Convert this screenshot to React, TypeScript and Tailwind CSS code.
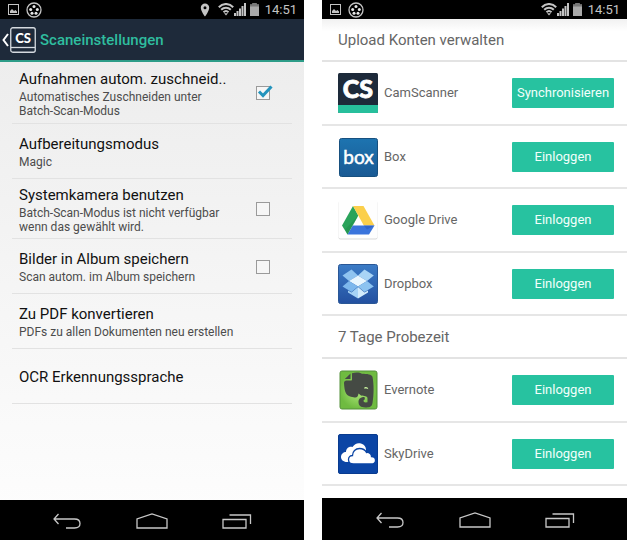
import type { ReactNode } from "react";
import { clsx } from "clsx";

const settings = [
  {
    id: "crop",
    title: "Aufnahmen autom. zuschneid..",
    lines: ["Automatisches Zuschneiden unter", "Batch-Scan-Modus"],
    checkbox: true,
    checked: true,
    height: "min-h-[62px]",
  },
  { id: "mode", title: "Aufbereitungsmodus", lines: ["Magic"], height: "min-h-[55px]" },
  {
    id: "camera",
    title: "Systemkamera benutzen",
    lines: ["Batch-Scan-Modus ist nicht verfügbar", "wenn das gewählt wird."],
    checkbox: true,
    height: "min-h-[60px]",
  },
  {
    id: "album",
    title: "Bilder in Album speichern",
    lines: ["Scan autom. im Album speichern"],
    checkbox: true,
    height: "min-h-[55px]",
  },
  {
    id: "pdf",
    title: "Zu PDF konvertieren",
    lines: ["PDFs zu allen Dokumenten neu erstellen"],
    height: "min-h-[55px]",
  },
  { id: "ocr", title: "OCR Erkennungssprache", lines: [], height: "min-h-[55px]" },
];

function CamScannerIcon() {
  return (
    <svg viewBox="0 0 40 40" className="size-10">
      <rect width="40" height="40" rx="1.500" fill="#1d2a3a" />
      <path d="M0 32h40v6.500a1.500 1.500 0 0 1-1.500 1.500h-37a1.500 1.500 0 0 1-1.500-1.500z" fill="#27bf9c" />
      <text
        x="20"
        y="25"
        textAnchor="middle"
        fill="#fff"
        stroke="#fff"
        strokeWidth="0.800"
        className="font-['Lato'] text-[25px] font-black"
      >
        CS
      </text>
    </svg>
  );
}

function BoxIcon() {
  return (
    <svg viewBox="0 0 40 40" className="size-10">
      <defs>
        <linearGradient id="box-bg" x1="0" y1="0" x2="0" y2="1">
          <stop offset="0" stopColor="#1d74b0" />
          <stop offset="1" stopColor="#1a5a94" />
        </linearGradient>
      </defs>
      <rect x="1.500" y="1.500" width="38" height="38" rx="2" fill="url(#box-bg)" stroke="#17507f" />
      <text
        x="20.500"
        y="27"
        textAnchor="middle"
        fill="#fff"
        stroke="#fff"
        strokeWidth="0.500"
        className="font-['Lato'] text-[19px] font-normal"
      >
        box
      </text>
    </svg>
  );
}

function DriveIcon() {
  return (
    <svg viewBox="0 0 40 40" className="size-10">
      <rect x="0.500" y="1" width="39" height="38.500" rx="2" fill="#d9d9d9" />
      <rect x="0.500" y="0" width="39" height="38.500" rx="2" fill="#fefefe" />
      <path d="M15 6 L4 25.500 L9.500 34.500 L20.300 15.500z" fill="#2aa35a" />
      <path d="M15 6h10.500L36.500 25.500H25.800z" fill="#fbcf4b" />
      <path d="M14.800 25.500H36.500L31 34.500H9.500z" fill="#3a74dc" />
      <path d="M14.800 25.500 L9.500 34.500 L7 29.500 L20.300 15.500z" fill="#1c8a48" opacity="0.45" />
      <path d="M25.800 25.500H36.500L29 29.500z" fill="#2556b5" opacity="0.5" />
    </svg>
  );
}

function DropboxIcon() {
  return (
    <svg viewBox="0 0 40 40" className="size-10">
      <defs>
        <linearGradient id="dropbox-bg" x1="0" y1="0" x2="0" y2="1">
          <stop offset="0" stopColor="#3c7cc6" />
          <stop offset="1" stopColor="#2350a0" />
        </linearGradient>
      </defs>
      <rect x="0.500" y="0.500" width="39" height="39" rx="2" fill="url(#dropbox-bg)" stroke="#2a5796" />
      <path d="M13.500 5.500 L20 11.500 L11 17 L4.500 11.500z" fill="#8fc4f0" />
      <path d="M26.500 5.500 L20 11.500 L29 17 L35.800 11.500z" fill="#a9d4f5" />
      <path d="M20 11.500 L29 17 L20 22.500 L11 17z" fill="#e8f6fe" />
      <path d="M11 17 L4.500 22.500 L13.500 28 L20 22.500z" fill="#7cb7ec" />
      <path d="M29 17 L35.800 22.500 L26.500 28 L20 22.500z" fill="#8cc3f0" />
      <path d="M20 23 L13.500 28.500 L10 26.500V28.500L20 34.500z" fill="#a6d3f6" />
      <path d="M20 23 L26.500 28.500 L30 26.500V28.500L20 34.500z" fill="#d2ebfc" />
    </svg>
  );
}

function EvernoteIcon() {
  return (
    <svg viewBox="0 0 40 40" className="size-10">
      <defs>
        <radialGradient id="evernote-bg">
          <stop offset="0" stopColor="#b4ec80" />
          <stop offset="1" stopColor="#6fbb40" />
        </radialGradient>
      </defs>
      <rect x="2" y="1" width="37" height="38" rx="2" fill="url(#evernote-bg)" stroke="#55913a" />
      <path
        d="M14 3.200 C18 2.200 22 2.500 24 3.800 C29 3.800 34 4.500 34.500 7 C36 14 36 25 34.500 33 C34 37 31 37.500 27.500 37.500 C22.500 37.500 20.500 35.500 20.500 31.800 C20.500 28.500 23 27 26.500 27 L27 29.500 C25 29.500 25 32.300 27.500 32.500 L29.500 32.300 V28.500 C29.500 25.800 26 26 23 25.500 L20.500 23.500 C20 27 19 27.800 15.500 27.200 C8 26.500 6.500 22.500 6 13 C6 11.500 7 10.500 8.500 10.500 H13 C13.700 10.500 14 10 14 9.500z"
        fill="#454a44"
      />
      <path d="M12.500 3.500 V9 H6.800z" fill="#454a44" />
      <path d="M26 18.500 C26.500 16.500 30 16.500 30.300 19.300 C29 18.500 27.500 18.500 26 18.500z" fill="#c9f2a0" />
    </svg>
  );
}

function SkyDriveIcon() {
  return (
    <svg viewBox="0 0 40 40" className="size-10">
      <rect x="0.500" y="0.500" width="39" height="39" rx="1.500" fill="#0b45a5" stroke="#093b8f" />
      <path
        d="M9 28 C5 28 3 25.500 3 23 C3 20 5.500 18 8 18 C8 14.500 11 12 14.500 13 C16.500 9.500 20 8.500 23 9.500 C26.500 10.500 28 13 28 16 L27 22 L14 28z"
        fill="#fff"
      />
      <path
        d="M15.500 30 C12 30 10.500 28 10.500 25.500 C10.500 23 12.500 21.500 14.500 21.500 C14.500 17.500 17.500 14.500 21.500 14.500 C25 14.500 27.500 16.500 28.500 18.500 C31.500 18.200 33.500 20 33.500 22.500 C36 22.500 37.500 24.200 37.500 26.200 C37.500 28.500 35.800 30 33.500 30z"
        fill="#fff"
        stroke="#0b45a5"
        strokeWidth="1.300"
      />
    </svg>
  );
}

const accounts = [
  { name: "CamScanner", action: "Synchronisieren", icon: <CamScannerIcon /> },
  { name: "Box", action: "Einloggen", icon: <BoxIcon /> },
  { name: "Google Drive", action: "Einloggen", icon: <DriveIcon /> },
  { name: "Dropbox", action: "Einloggen", icon: <DropboxIcon /> },
];

const trialAccounts = [
  { name: "Evernote", action: "Einloggen", icon: <EvernoteIcon /> },
  { name: "SkyDrive", action: "Einloggen", icon: <SkyDriveIcon /> },
];

function StatusBar({ location = false }: { location?: boolean }) {
  return (
    <div className="flex h-[19px] items-center bg-black pr-[7px] pl-2 text-[#c4c4c4]">
      <svg viewBox="0 0 11 11" className="h-[11px] w-[11px]" fill="none">
        <rect x="0.500" y="0.500" width="10" height="10" stroke="currentColor" />
        <path d="M2 9V7l2-2 2 2 1.500-1L9 7.500V9z" fill="currentColor" />
      </svg>
      <svg viewBox="0 0 16 16" className="ml-[7px] size-4" fill="none">
        <circle cx="8" cy="8" r="7" stroke="currentColor" strokeWidth="1.300" />
        <g fill="#e8e8e8">
          <circle cx="8" cy="4.500" r="1.500" />
          <circle cx="4.700" cy="7.500" r="1.500" />
          <circle cx="11.300" cy="7.500" r="1.500" />
          <circle cx="6" cy="11.200" r="1.500" />
          <circle cx="10" cy="11.200" r="1.500" />
        </g>
      </svg>
      <div className="ml-auto flex items-center">
        {location && (
          <svg viewBox="0 0 10 14" className="mr-2 h-[14px] w-[10px]">
            <path
              d="M5 .5a4.200 4.200 0 0 0-4.200 4.200C.8 8 5 13.500 5 13.500S9.200 8 9.200 4.700A4.200 4.200 0 0 0 5 .5zm0 2.700a1.500 1.500 0 1 1 0 3 1.500 1.500 0 0 1 0-3z"
              fill="currentColor"
              fillRule="evenodd"
            />
          </svg>
        )}
        <svg viewBox="0 0 16 13" className="h-[13px] w-4" fill="none" stroke="currentColor" strokeWidth="2">
          <path d="M.8 4.200C5-.1 11-.1 15.200 4.200" />
          <path d="M3.200 6.800c2.800-2.900 6.800-2.900 9.600 0" />
          <path d="M5.500 9.200c1.500-1.500 3.500-1.500 5 0" />
          <path d="M8 12.500 6 10.200h4z" fill="currentColor" stroke="none" />
        </svg>
        <svg viewBox="0 0 12 13" className="h-[13px] w-3" fill="currentColor">
          <path d="M0 10h2v3H0zM2.500 8h2v5h-2zM5 5.500h2V13H5zM7.500 3h2v10h-2zM10 0h2v13h-2z" />
        </svg>
        <svg viewBox="0 0 9 13" className="ml-1 h-[13px] w-[9px]">
          <path d="M2.500 0h4v1.500H9V13H0V1.500h2.500z" fill="#a9a9a9" />
          <path d="M2.500 0h4v1.500H9v2H0v-2h2.500z" fill="#777" />
        </svg>
        <span className="ml-[6px] text-[13px] leading-4">14:51</span>
      </div>
    </div>
  );
}

function NavBar({ className }: { className?: string }) {
  const button = "flex h-6 w-9 items-center justify-center";
  return (
    <nav className={clsx("flex items-center justify-center gap-[49px] bg-black pt-[2px] text-[#c8c8c8]", className)}>
      <button type="button" aria-label="Zurück" className={button}>
        <svg viewBox="0 0 28 16" className="h-4 w-7" fill="none" stroke="currentColor" strokeWidth="1.300">
          <path d="M5.500 1 1 6l4.500 5M1 6h20.500c3 0 5.500 1.500 5.500 4.500S25 15 21.500 15H13" />
        </svg>
      </button>
      <button type="button" aria-label="Startseite" className={button}>
        <svg viewBox="0 0 32 16" className="h-4 w-8" fill="none" stroke="currentColor" strokeWidth="1.300">
          <path d="M1 15V6L16 1l15 5v9z" />
        </svg>
      </button>
      <button type="button" aria-label="Letzte Apps" className={button}>
        <svg viewBox="0 0 30 16" className="h-4 w-[30px]" fill="none" stroke="currentColor" strokeWidth="1.300">
          <path d="M1 6.500h23V15H1zM7.500 2h21v9" />
        </svg>
      </button>
    </nav>
  );
}

function SettingRow({ setting }: { setting: (typeof settings)[number] }) {
  const { id, title, lines, checkbox, checked, height } = setting;
  const Row = checkbox ? "label" : "div";
  return (
    <li>
      <Row
        htmlFor={checkbox ? id : undefined}
        className={clsx("mx-3 flex items-center border-b border-[#e2e2e2] pt-px pr-[22px] pl-[7px]", height)}
      >
        <div className="min-w-0 flex-1">
          <p className="text-[15px] leading-5 whitespace-nowrap text-[#111]">{title}</p>
          {lines.length > 0 && (
            <p className="mt-px text-xs leading-[14px] text-[#4c4c4c]">
              {lines.map((line) => (
                <span key={line} className="block whitespace-nowrap">
                  {line}
                </span>
              ))}
            </p>
          )}
        </div>
        {checkbox && (
          <span className="relative flex">
            <input
              id={id}
              type="checkbox"
              defaultChecked={checked}
              className="peer size-[14px] appearance-none border border-[#9a9a9a] bg-[#f6f6f6]"
            />
            <svg
              viewBox="0 0 16 14"
              className="pointer-events-none absolute -top-px left-px hidden h-[14px] w-4 peer-checked:block"
              fill="none"
            >
              <path d="M2 6.500 6 10.500 14.500 1.500" stroke="#2494bd" strokeWidth="3" />
            </svg>
          </span>
        )}
      </Row>
    </li>
  );
}

function SectionTitle({ children, className }: { children: ReactNode; className?: string }) {
  return (
    <h2
      className={clsx(
        "flex h-[43px] items-center border-b-2 border-[#e3e3e3] pl-4 text-[15px] leading-5 font-normal text-[#666]",
        className,
      )}
    >
      {children}
    </h2>
  );
}

function AccountList({ items }: { items: typeof accounts }) {
  return (
    <ul>
      {items.map(({ name, action, icon }) => (
        <li
          key={name}
          className="flex min-h-[63px] items-center border-b-2 border-[#e6e6e6] pr-[13px] pl-4 odd:min-h-[64px]"
        >
          {icon}
          <span className="ml-[6px] flex-1 text-[13px] leading-4 text-[#666]">{name}</span>
          <button
            type="button"
            className="h-[30px] w-[102px] rounded-[1px] bg-[#27c2a0] text-[13px] leading-4 text-[#f2fffb]"
          >
            {action}
          </button>
        </li>
      ))}
    </ul>
  );
}

export default function App() {
  return (
    <main className="grid min-h-screen grid-cols-[304fr_305fr] gap-[18px] bg-white pr-px pb-[2px] font-['Roboto',sans-serif]">
      <section className="flex flex-col bg-linear-to-b from-[#ebebeb] to-[#fefefe]">
        <StatusBar location />
        <header className="flex h-[43px] items-center border-b-2 border-[#2d9c88] bg-[#1e2a3a] pl-[2px]">
          <a href="#" aria-label="Zurück" className="flex items-center">
            <svg viewBox="0 0 7 14" className="h-[14px] w-[7px]" fill="none" stroke="#fff" strokeWidth="2">
              <path d="M6 1 1.500 7 6 13" />
            </svg>
            <svg viewBox="0 0 26 26" className="ml-px size-[26px]" fill="none">
              <rect x="0.750" y="0.750" width="24.500" height="24.500" rx="2" stroke="#d5dae0" strokeWidth="1.300" />
              <path d="M1 20.500h24" stroke="#d5dae0" strokeWidth="1.300" />
              <text x="13" y="15.500" textAnchor="middle" fill="#fff" className="font-['Lato'] text-[13px] font-black">
                CS
              </text>
            </svg>
          </a>
          <h1 className="ml-1 text-[15px] leading-5 font-medium text-[#2fbd9f]">Scaneinstellungen</h1>
        </header>
        <ul className="flex-1">
          {settings.map((setting) => (
            <SettingRow key={setting.id} setting={setting} />
          ))}
        </ul>
        <NavBar className="h-10" />
      </section>

      <section className="flex flex-col bg-white">
        <StatusBar />
        <div className="flex-1">
          <SectionTitle className="bg-linear-to-b from-[#f1f1f1] to-white to-30%">Upload Konten verwalten</SectionTitle>
          <AccountList items={accounts} />
          <SectionTitle>7 Tage Probezeit</SectionTitle>
          <AccountList items={trialAccounts} />
        </div>
        <NavBar className="h-[42px]" />
      </section>
    </main>
  );
}
